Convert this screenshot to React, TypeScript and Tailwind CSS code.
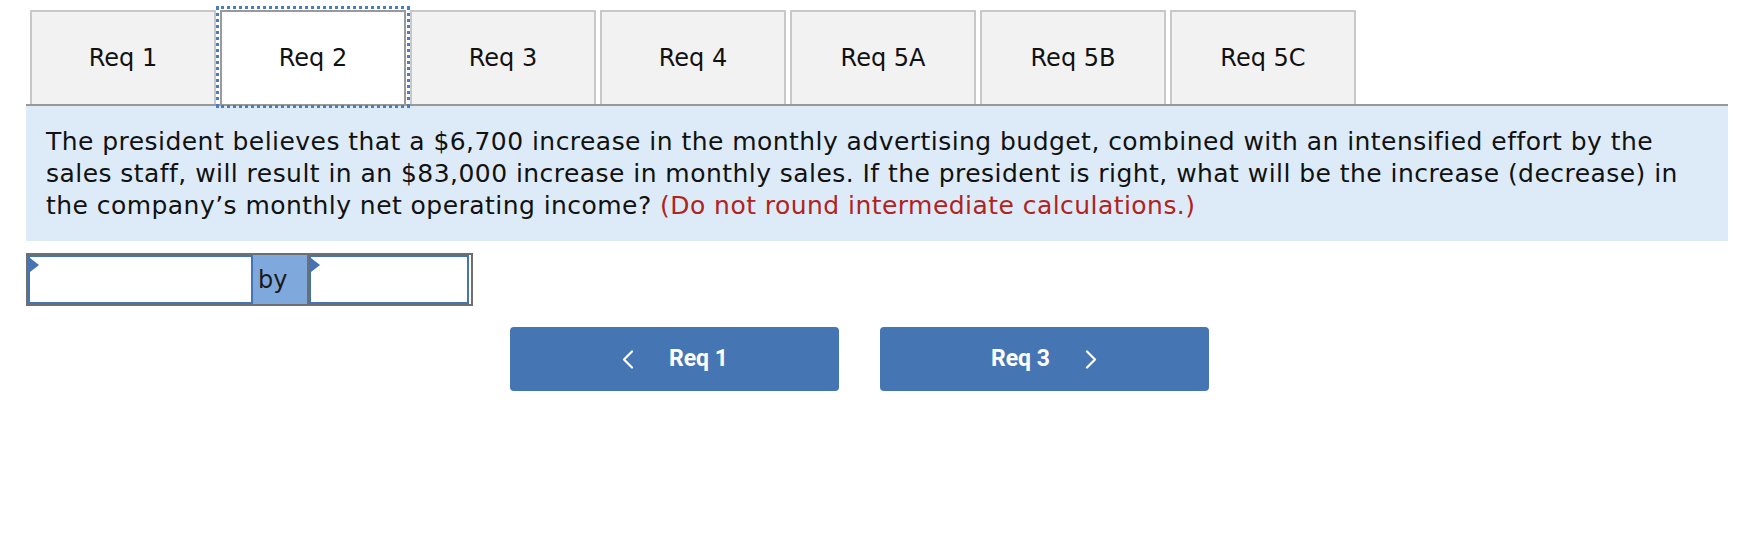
import React from "react";

const tabs = ["Req 1", "Req 2", "Req 3", "Req 4", "Req 5A", "Req 5B", "Req 5C"];

const Chevron = ({ dir }: { dir: "left" | "right" }) => (
  <svg width="14" height="19" viewBox="0 0 14 19" fill="none">
    <path
      d={dir === "left" ? "M11 1.5 L3 9.5 L11 17.5" : "M3 1.5 L11 9.5 L3 17.5"}
      stroke="white"
      strokeWidth="2.2"
      strokeLinecap="round"
      strokeLinejoin="round"
    />
  </svg>
);

// little blue marker at the top-left of each answer cell
const Flag = () => (
  <div className="absolute left-0 top-[1px] w-0 h-0 border-y-[7px] border-y-transparent border-l-[9px] border-l-[#4673b3]" />
);

const App: React.FC = () => {
  return (
    <div className="w-[1758px] h-[538px] bg-white pl-[26px] pr-[30px] pt-[10px] font-['DejaVu_Sans',sans-serif] text-[#111]">
      {/* Tabs */}
      <div className="flex gap-[4px] pl-[4px]">
        {tabs.map((t, i) => (
          <div
            key={t}
            className={
              i === 1
                ? "w-[186px] h-[94px] flex items-center justify-center bg-white border-2 border-b-0 border-[#9a9a9a] outline-[3px] outline-dotted outline-[#4a7cc4] outline-offset-[1px] text-[24px]"
                : "w-[186px] h-[94px] flex items-center justify-center bg-[#f2f2f2] border-2 border-b-0 border-[#c8c8c8] text-[24px]"
            }
          >
            {t}
          </div>
        ))}
      </div>

      {/* Question */}
      <div className="border-t-2 border-[#999] bg-[#ddebf8] pl-[20px] pr-[20px] pt-[20px] pb-[19px] text-[25px] tracking-[0.45px] leading-[32px]">
        The president believes that a $6,700 increase in the monthly advertising budget, combined with an intensified effort
        by the sales staff, will result in an $83,000 increase in monthly sales. If the president is right, what will be
        the increase (decrease) in the company’s monthly net operating income?{" "}
        <span className="text-[#b0231e]">(Do not round intermediate calculations.)</span>
      </div>

      {/* Answer row */}
      <div className="mt-[12px] flex w-[447px] h-[53px] border-2 border-[#6f6f6f]">
        <div className="relative w-[225px] h-full bg-white border-2 border-[#4673b3]">
          <Flag />
        </div>
        <div className="w-[56px] h-full bg-[#7fa9dc] border-r-2 border-[#6f6f6f] pl-[5px] pt-[9px] text-[24px] leading-[32px] text-[#1a1a1a]">
          by
        </div>
        <div className="relative w-[160px] h-full bg-white border-2 border-[#4673b3]">
          <Flag />
        </div>
      </div>

      {/* Nav buttons */}
      <div className="mt-[21px] ml-[484px] flex gap-[41px] font-['Roboto',sans-serif]">
        <button className="w-[329px] h-[64px] rounded-[4px] bg-[#4675b4] text-white flex items-center justify-center gap-[34px] text-[23px] font-bold">
          <Chevron dir="left" />
          <span>Req 1</span>
        </button>
        <button className="w-[329px] h-[64px] rounded-[4px] bg-[#4675b4] text-white flex items-center justify-center gap-[34px] text-[23px] font-bold">
          <span>Req 3</span>
          <Chevron dir="right" />
        </button>
      </div>
    </div>
  );
};

export default App;
